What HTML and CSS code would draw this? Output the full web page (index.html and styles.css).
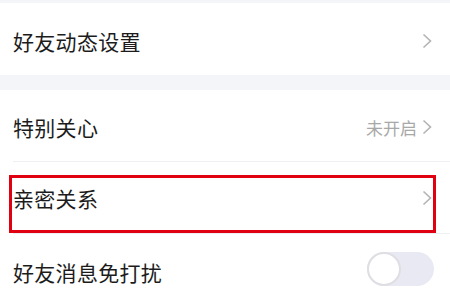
FILE: index.html
```html
<!DOCTYPE html>
<html lang="zh-CN">
<head>
<meta charset="utf-8">
<link rel="stylesheet" href="styles.css">
</head>
<body>
<div class="page">
  <div class="group top">
    <div class="row r72">
      <span class="label">好友动态设置</span>
      <span class="right">
        <svg class="chev" width="10" height="16" viewBox="0 0 10 16"><polyline points="1.5,1.5 8.5,8 1.5,14.5" fill="none" stroke="#b3b3b3" stroke-width="1.6"/></svg>
      </span>
    </div>
  </div>
  <div class="group">
    <div class="row r71">
      <span class="label">特别关心</span>
      <span class="right">
        <span class="value">未开启</span>
        <svg class="chev" width="10" height="16" viewBox="0 0 10 16"><polyline points="1.5,1.5 8.5,8 1.5,14.5" fill="none" stroke="#b3b3b3" stroke-width="1.6"/></svg>
      </span>
    </div>
    <div class="divider"></div>
    <div class="row r71 marked">
      <span class="label">亲密关系</span>
      <span class="right">
        <svg class="chev" width="10" height="16" viewBox="0 0 10 16"><polyline points="1.5,1.5 8.5,8 1.5,14.5" fill="none" stroke="#b3b3b3" stroke-width="1.6"/></svg>
      </span>
      <div class="highlight"></div>
    </div>
    <div class="divider"></div>
    <div class="row r72">
      <span class="label">好友消息免打扰</span>
      <span class="toggle"><span class="knob"></span></span>
    </div>
  </div>
</div>
</body>
</html>
```

FILE: styles.css
```css
html, body {
  margin: 0;
  padding: 0;
  background: #f4f5f9;
}
.page {
  width: 450px;
  height: 300px;
  overflow: hidden;
  padding-top: 3px;
  box-sizing: border-box;
  font-family: "Noto Sans CJK SC", "Noto Sans", sans-serif;
}
.group {
  background: #ffffff;
}
.group.top {
  margin-bottom: 15px;
}
.row {
  display: flex;
  align-items: center;
  justify-content: space-between;
  padding: 3px 18px 0 13px;
  box-sizing: border-box;
  position: relative;
}
.r72 { height: 72px; }
.r71 { height: 71px; }
.marked { padding-top: 1px; }
.label {
  font-size: 21px;
  color: #1c1c1c;
  letter-spacing: 0.3px;
}
.right {
  display: flex;
  align-items: center;
}
.value {
  font-size: 17px;
  color: #a8a8a8;
  margin-right: 5px;
}
.chev {
  display: block;
}
.divider {
  height: 1px;
  margin-left: 13px;
  background: #eeeff3;
}
.highlight {
  position: absolute;
  left: 9px;
  top: 13px;
  width: 427px;
  height: 58px;
  border: 3px solid #e0000f;
  box-sizing: border-box;
}
.toggle {
  width: 67px;
  height: 34px;
  border-radius: 17px;
  background: #e8e9f2;
  position: relative;
  margin-right: -2px;
  margin-top: -6px;
}
.knob {
  position: absolute;
  left: 0;
  top: 0;
  width: 34px;
  height: 34px;
  border-radius: 50%;
  background: #ffffff;
  border: 2px solid #dedee3;
  box-sizing: border-box;
}
```
